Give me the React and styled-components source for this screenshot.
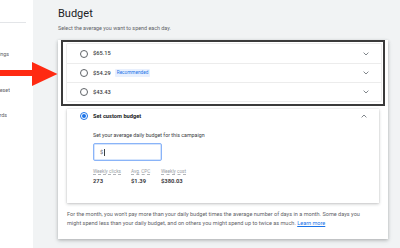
import React from "react";
import styled, { createGlobalStyle } from "styled-components";

const Global = createGlobalStyle`
  html, body { margin: 0; padding: 0; background: #f1f3f4; }
  * { box-sizing: border-box; }
`;

const Page = styled.div`
  position: relative;
  display: flex;
  width: 400px;
  height: 248px;
  overflow: hidden;
  background: #f1f3f4;
  font-family: Roboto, "Liberation Sans", Arial, sans-serif;
  font-size: 5px;
  line-height: 1.2;
  color: #3c4043;
`;

const Sidebar = styled.nav`
  flex: 0 0 33px;
  background: #fff;
  padding-top: 22px;
  overflow: hidden;
`;

const SideRule = styled.div`
  width: 26px;
  border-top: 1px solid #e3e5e8;
`;

const SideItem = styled.div`
  display: flex;
  justify-content: flex-end;
  overflow: hidden;
  white-space: nowrap;
  width: ${(p) => p.$w}px;
  margin-top: ${(p) => p.$top}px;
  font-size: 5.4px;
  line-height: 6px;
  color: #5f6368;
`;

const Main = styled.main`
  flex: 1;
  padding: 7px 12px 0 25px;
`;

const Title = styled.h1`
  margin: 0;
  font-size: 11px;
  line-height: 14px;
  font-weight: 400;
  color: #202124;
`;

const Subtitle = styled.p`
  margin: 4px 0 0;
  font-size: 5.4px;
  line-height: 7px;
  color: #5f6368;
`;

const Card = styled.section`
  margin-top: 8px;
  width: 330px;
  height: 199px;
  background: #fff;
  padding: 0 9px;
  box-shadow: 0 1px 3px rgba(60, 64, 67, 0.3), 0 2px 5px rgba(60, 64, 67, 0.12);
`;

const Highlight = styled.div`
  margin: 1px -6px 0;
  border: 2px solid #3a3a3a;
  padding: 2px 2px 3px 4px;
`;

const OptionsPanel = styled.div`
  background: #fff;
  box-shadow: 0 0 0 1px #ededed, 0 1px 1px rgba(0, 0, 0, 0.06);
  border-radius: 1px;
`;

const Row = styled.div`
  display: flex;
  align-items: center;
  height: ${(p) => p.$h || 19}px;
  padding: 0 12px 0 13px;
  border-top: ${(p) => (p.$first ? "none" : "1px solid #ececec")};
`;

const Radio = styled.span`
  width: 8px;
  height: 8px;
  border-radius: 50%;
  border: 1.2px solid ${(p) => (p.$on ? "#1a73e8" : "#5f6368")};
  flex-shrink: 0;
  display: flex;
  align-items: center;
  justify-content: center;
  &::after {
    content: "";
    width: 4px;
    height: 4px;
    border-radius: 50%;
    background: ${(p) => (p.$on ? "#1a73e8" : "transparent")};
  }
`;

const OptionLabel = styled.span`
  margin-left: 5px;
  font-size: 5.7px;
  font-weight: ${(p) => (p.$bold ? 700 : 500)};
  color: ${(p) => (p.$bold ? "#202124" : "#3c4043")};
`;

const Badge = styled.span`
  margin-left: 4px;
  background: #e8f0fe;
  color: #1a73e8;
  font-size: 4.7px;
  line-height: 8px;
  padding: 0 2px;
  border-radius: 1px;
`;

const Spacer = styled.span`
  flex: 1;
`;

const Chevron = ({ up }) => (
  <svg width="6" height="4" viewBox="0 0 6 4" style={{ display: "block" }}>
    <path
      d={up ? "M0.6 3.4 L3 1 L5.4 3.4" : "M0.6 0.6 L3 3 L5.4 0.6"}
      fill="none"
      stroke="#80868b"
      strokeWidth="1"
    />
  </svg>
);

const Expanded = styled.div`
  margin-top: 3px;
  height: 94px;
  background: #fff;
  box-shadow: 0 1px 3px rgba(60, 64, 67, 0.3), 0 0 1px rgba(60, 64, 67, 0.2);
`;

const ExpandedBody = styled.div`
  padding: 9px 0 0 26px;
`;

const FieldLabel = styled.div`
  font-size: 5.3px;
  line-height: 7px;
  color: #3c4043;
`;

const Input = styled.div`
  margin-top: 4px;
  width: 69px;
  height: 18px;
  border: 1px solid #8ab4f8;
  border-radius: 2px;
  box-shadow: inset 0 0 0 0.5px #aecbfa;
  display: flex;
  align-items: center;
  padding-left: 6px;
  font-size: 5.5px;
  color: #5f6368;
`;

const Caret = styled.span`
  display: inline-block;
  width: 0.6px;
  height: 7px;
  background: #3c4043;
  margin-left: 1px;
`;

const Stats = styled.div`
  display: flex;
  margin-top: 8px;
`;

const Stat = styled.div`
  width: ${(p) => p.$w}px;
  display: flex;
  flex-direction: column;
  align-items: flex-start;
`;

const StatLabel = styled.span`
  font-size: 4.7px;
  line-height: 5px;
  color: #9aa0a6;
  border-bottom: 0.6px dashed #b0b4b8;
`;

const StatValue = styled.span`
  margin-top: 3px;
  font-size: 5.8px;
  line-height: 7px;
  font-weight: 700;
  color: #3c4043;
`;

const Footer = styled.p`
  margin: 7px 0 0;
  font-size: 5.55px;
  line-height: 8.5px;
  color: #5f6368;
  white-space: nowrap;
`;

const Link = styled.a`
  color: #1a73e8;
  text-decoration: underline;
`;

const Arrow = styled.svg`
  position: absolute;
  left: 0;
  top: 62px;
`;

const options = [
  { price: "$65.15" },
  { price: "$54.29", recommended: true },
  { price: "$43.43" },
];

export default function App() {
  return (
    <>
      <Global />
      <Page>
        <Sidebar>
          <SideRule />
          <SideItem $w={9} $top={28}>Bidding settings</SideItem>
          <SideItem $w={10} $top={30}>Budget preset</SideItem>
          <SideItem $w={7} $top={19}>Keywords</SideItem>
        </Sidebar>
        <Main>
          <Title>Budget</Title>
          <Subtitle>Select the average you want to spend each day.</Subtitle>
          <Card>
            <Highlight>
              <OptionsPanel>
                {options.map((o, i) => (
                  <Row key={o.price} $first={i === 0}>
                    <Radio />
                    <OptionLabel>{o.price}</OptionLabel>
                    {o.recommended && <Badge>Recommended</Badge>}
                    <Spacer />
                    <Chevron />
                  </Row>
                ))}
              </OptionsPanel>
            </Highlight>
            <Expanded>
              <Row $first $h={14}>
                <Radio $on />
                <OptionLabel $bold>Set custom budget</OptionLabel>
                <Spacer />
                <Chevron up />
              </Row>
              <ExpandedBody>
                <FieldLabel>Set your average daily budget for this campaign</FieldLabel>
                <Input>
                  $<Caret />
                </Input>
                <Stats>
                  <Stat $w={38}>
                    <StatLabel>Weekly clicks</StatLabel>
                    <StatValue>273</StatValue>
                  </Stat>
                  <Stat $w={30}>
                    <StatLabel>Avg. CPC</StatLabel>
                    <StatValue>$1.39</StatValue>
                  </Stat>
                  <Stat $w={40}>
                    <StatLabel>Weekly cost</StatLabel>
                    <StatValue>$380.03</StatValue>
                  </Stat>
                </Stats>
              </ExpandedBody>
            </Expanded>
            <Footer>
              For the month, you won't pay more than your daily budget times the average number of
              days in a month. Some days you
              <br />
              might spend less than your daily budget, and on others you might spend up to twice as
              much. <Link>Learn more</Link>
            </Footer>
          </Card>
        </Main>
        <Arrow width="58" height="25" viewBox="0 0 58 25">
          <rect x="0" y="8" width="34" height="6" fill="#ff2a12" />
          <polygon points="32,0 57.5,12 32,24" fill="#ff2a12" />
        </Arrow>
      </Page>
    </>
  );
}
